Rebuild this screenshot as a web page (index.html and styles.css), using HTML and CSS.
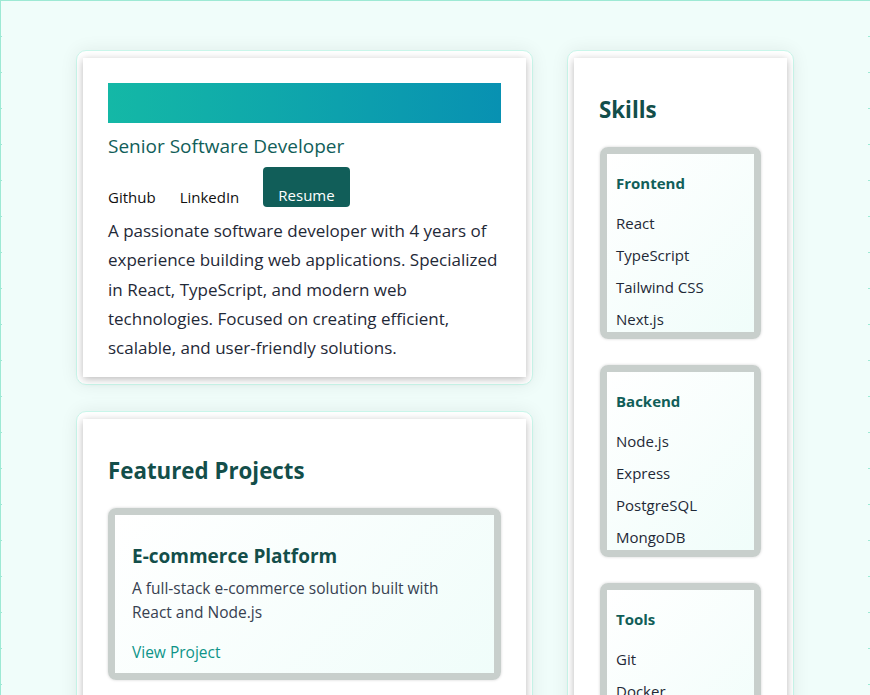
FILE: index.html
```html
<!DOCTYPE html>
<html lang="en">

<head>
      <meta charset="UTF-8">
      <meta name="viewport" content="width=device-width, initial-scale=1.0">
      <title>Portfolio</title>
      <link rel="stylesheet" href="styles.css">
</head>

<body>
      <div class="page">
            <main class="layout">

                  <div class="main-col">
                        <!-- intro -->
                        <section class="panel">
                              <div class="panel-body intro">
                                    <div class="banner"></div>
                                    <h1 class="role">Senior Software Developer</h1>
                                    <nav class="links">
                                          <a href="#">Github</a>
                                          <a href="#">LinkedIn</a>
                                          <a href="#" class="btn-resume">Resume</a>
                                    </nav>
                                    <p class="about">A passionate software developer with 4 years of experience building
                                          web applications. Specialized in React, TypeScript, and modern web
                                          technologies. Focused on creating efficient, scalable, and user-friendly
                                          solutions.</p>
                              </div>
                        </section>

                        <!-- projects -->
                        <section class="panel">
                              <div class="panel-body">
                                    <h2 class="section-title">Featured Projects</h2>
                                    <div class="tile">
                                          <div class="tile-body project">
                                                <h3>E-commerce Platform</h3>
                                                <p>A full-stack e-commerce solution built with React and Node.js</p>
                                                <a href="#" class="project-link">View Project</a>
                                          </div>
                                    </div>
                                    <div class="tile">
                                          <div class="tile-body project">
                                                <h3>Task Management App</h3>
                                                <p>A collaborative task manager with real-time updates</p>
                                                <a href="#" class="project-link">View Project</a>
                                          </div>
                                    </div>
                              </div>
                        </section>
                  </div>

                  <!-- skills -->
                  <aside class="panel">
                        <div class="panel-body skills">
                              <h2 class="section-title">Skills</h2>
                              <div class="tile">
                                    <div class="tile-body skill">
                                          <h3>Frontend</h3>
                                          <ul>
                                                <li>React</li>
                                                <li>TypeScript</li>
                                                <li>Tailwind CSS</li>
                                                <li>Next.js</li>
                                          </ul>
                                    </div>
                              </div>
                              <div class="tile">
                                    <div class="tile-body skill">
                                          <h3>Backend</h3>
                                          <ul>
                                                <li>Node.js</li>
                                                <li>Express</li>
                                                <li>PostgreSQL</li>
                                                <li>MongoDB</li>
                                          </ul>
                                    </div>
                              </div>
                              <div class="tile">
                                    <div class="tile-body skill">
                                          <h3>Tools</h3>
                                          <ul>
                                                <li>Git</li>
                                                <li>Docker</li>
                                                <li>AWS</li>
                                                <li>CI/CD</li>
                                          </ul>
                                    </div>
                              </div>
                        </div>
                  </aside>

            </main>
      </div>
</body>

</html>
```

FILE: styles.css
```css
* {
      padding: 0;
      margin: 0;
      box-sizing: border-box;
}

body {
      font-family: "Open Sans", "Noto Sans", sans-serif;
      color: #1f2937;
      background-color: #f0fdfa;
      background-image: linear-gradient(#9de9d4 1px, transparent 1px),
            linear-gradient(90deg, #9de9d4 1px, transparent 1px);
      background-size: 36px 36px;
}

a {
      text-decoration: none;
      color: inherit;
}

ul {
      list-style: none;
}

.page {
      margin: 1px 2px 0;
      min-height: 100vh;
      background-color: #f0fdfa;
      padding: 49px 0 40px;
}

.layout {
      width: 718px;
      margin: 0 auto;
      display: grid;
      grid-template-columns: 1fr 227px;
      gap: 34px;
      align-items: start;
}

.main-col {
      display: flex;
      flex-direction: column;
      gap: 26px;
}

/* ---- outer frame + white card ---- */
.panel {
      border: 1px solid #c9f6ea;
      border-radius: 10px;
      padding: 7px 6px;
      background-color: #fff;
      box-shadow: 0 0 18px rgba(0, 0, 0, 0.07);
}

.panel-body {
      background-color: #fff;
      padding: 25px;
      box-shadow: 0 2px 8px rgba(0, 0, 0, 0.28);
}

.intro {
      padding-bottom: 15px;
}

.banner {
      height: 40px;
      background: linear-gradient(90deg, #14b8a6, #0891b2);
}

.role {
      margin-top: 9px;
      font-size: 19px;
      line-height: 28px;
      font-weight: 400;
      color: #115e59;
}

.links {
      margin-top: 7px;
      display: flex;
      align-items: flex-end;
      gap: 24px;
      font-size: 15px;
      line-height: 20px;
      color: #111;
}

.btn-resume {
      background-color: #115e59;
      color: #fff;
      border-radius: 4px;
      padding: 18px 15px 2px;
}

.about {
      margin-top: 9px;
      font-size: 17px;
      line-height: 29.25px;
}

.section-title {
      margin: 11px 0 21px;
      font-size: 22.3px;
      line-height: 32px;
      font-weight: 700;
      color: #134e4a;
}

/* ---- grey ring tiles ---- */
.tile {
      border: 7px solid #c8cfcc;
      border-radius: 8px;
      box-shadow: 0 0 3px rgba(0, 0, 0, 0.18);
      margin-bottom: 26px;
}

.tile-body {
      background: linear-gradient(135deg, #ffffff, #f0fdfa);
}

.skills {
      padding-right: 26px;
}

.skills .tile {
      margin-left: 1px;
}

.skill {
      height: 178px;
      overflow: hidden;
      padding: 17px 9px 0;
}

.skill h3 {
      font-size: 15px;
      line-height: 24px;
      font-weight: 700;
      color: #115e59;
      margin-bottom: 12px;
}

.skill li {
      font-size: 15px;
      line-height: 32px;
}

.project {
      padding: 27px 17px 9px;
}

.project h3 {
      font-size: 19px;
      line-height: 28px;
      font-weight: 700;
      color: #134e4a;
}

.project p {
      margin-top: 6px;
      font-size: 15.5px;
      line-height: 24px;
      color: #374151;
}

.project-link {
      display: inline-block;
      margin-top: 16px;
      font-size: 15.5px;
      line-height: 24px;
      color: #0d9488;
}
```
